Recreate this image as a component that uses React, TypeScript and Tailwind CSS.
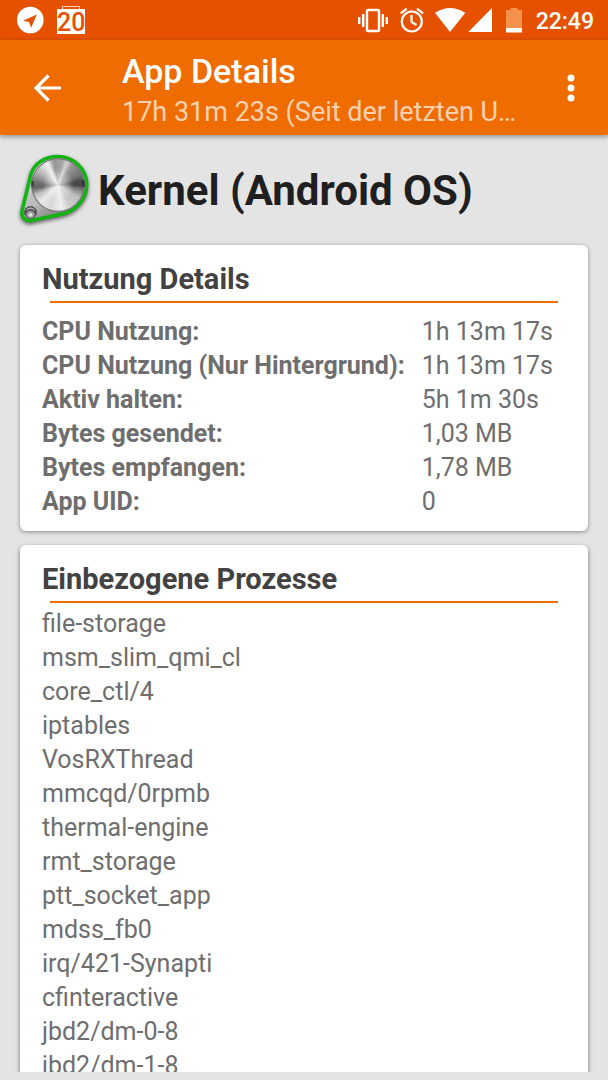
import React from 'react';

type Row = { label: string; value: string };

const usage: Row[] = [
  { label: 'CPU Nutzung:', value: '1h 13m 17s' },
  { label: 'CPU Nutzung (Nur Hintergrund):', value: '1h 13m 17s' },
  { label: 'Aktiv halten:', value: '5h 1m 30s' },
  { label: 'Bytes gesendet:', value: '1,03 MB' },
  { label: 'Bytes empfangen:', value: '1,78 MB' },
  { label: 'App UID:', value: '0' },
];

const processes = [
  'file-storage',
  'msm_slim_qmi_cl',
  'core_ctl/4',
  'iptables',
  'VosRXThread',
  'mmcqd/0rpmb',
  'thermal-engine',
  'rmt_storage',
  'ptt_socket_app',
  'mdss_fb0',
  'irq/421-Synapti',
  'cfinteractive',
  'jbd2/dm-0-8',
  'jbd2/dm-1-8',
];

function StatusBar() {
  return (
    <div className="flex h-10 shrink-0 items-center justify-between bg-[#e65100] pr-[14px] pl-4 text-white">
      <div className="flex items-center gap-[13px]">
        <svg className="h-7 w-7" viewBox="0 0 28 28" aria-hidden="true">
          <circle cx="14.3" cy="14" r="13.3" fill="#fff" />
          <path d="M20.8 8.4 7 14.7l6 1.3 2.2 5.8z" fill="#e65100" />
        </svg>
        <div className="flex flex-col items-center">
          <span className="h-[3px] w-[18px] border border-b-0 border-white/70" />
          <span className="h-[25px] w-7 bg-white text-center text-[25px] leading-7 font-medium text-[#e65100]">20</span>
        </div>
      </div>
      <div className="flex items-center gap-3">
        <svg className="h-10 w-[172px]" viewBox="352 0 172 40" aria-hidden="true">
          {/* vibrate */}
          <g fill="none" stroke="#fff" strokeWidth="2.4">
            <rect x="367" y="10" width="12" height="21" rx="1" />
            <path d="M363.2 14v13M359.2 17v7M382.8 14v13M386.8 17v7" />
          </g>
          {/* alarm */}
          <g fill="none" stroke="#fff" strokeWidth="2.2">
            <circle cx="411.8" cy="21.5" r="10" />
            <path d="M411.5 15v7l5 3M400.7 13.4l6-4.7M423 13.4l-6-4.7" />
          </g>
          <path d="M435 12.7q15-9.4 30.3 0L450 32z" fill="#fff" />
          <path d="M492 8v24h-23.7z" fill="#fff" />
          <path d="M506 10h4.5V8h7v2h4.5v18h-16z" fill="#f4914c" />
          <path d="M506 28h16v4.5h-16z" fill="#fff" />
        </svg>
        <time className="pt-1 text-[23px] leading-9 font-medium">22:49</time>
      </div>
    </div>
  );
}

function AppBar() {
  return (
    <header className="relative flex h-[95px] shrink-0 items-center bg-[#ef6c00] text-white shadow-[0_2px_5px_rgba(0,0,0,0.35)]">
      <button type="button" aria-label="Zurück" className="flex h-full w-[122px] shrink-0 items-center pl-8">
        <svg className="h-8 w-8" viewBox="0 0 32 32" fill="none" stroke="#fff" strokeWidth="3.2" aria-hidden="true">
          <path d="M29 16H4M16.5 3.5 4 16l12.5 12.5" />
        </svg>
      </button>
      <div className="min-w-0 flex-1 pt-2">
        <h1 className="text-[34px] leading-10 font-medium">App Details</h1>
        <p className="text-[27px] leading-[42px] whitespace-nowrap text-white/70">17h 31m 23s (Seit der letzten U…</p>
      </div>
      <button
        type="button"
        aria-label="Weitere Optionen"
        className="flex h-full w-[74px] shrink-0 items-center justify-center"
      >
        <svg className="h-8 w-8" viewBox="0 0 32 32" fill="#fff" aria-hidden="true">
          <circle cx="16" cy="6" r="3.5" />
          <circle cx="16" cy="16" r="3.5" />
          <circle cx="16" cy="26" r="3.5" />
        </svg>
      </button>
    </header>
  );
}

// brushed metal: [angle, grey], clockwise from the right
const shades = [
  [0, 75],
  [12, 130],
  [30, 190],
  [60, 205],
  [80, 240],
  [110, 215],
  [135, 235],
  [155, 190],
  [172, 100],
  [185, 110],
  [205, 165],
  [225, 205],
  [243, 245],
  [258, 150],
  [280, 165],
  [290, 215],
  [305, 150],
  [335, 115],
  [350, 70],
  [360, 75],
];

const wedges = Array.from({ length: 90 }, (_, i) => {
  const angle = i * 4;
  const next = shades.findIndex(([a]) => a > angle);
  const [a0, g0] = shades[next - 1];
  const [a1, g1] = shades[next];
  const grey = Math.round(g0 + ((g1 - g0) * (angle - a0)) / (a1 - a0));
  const point = (deg: number) => {
    const rad = (deg * Math.PI) / 180;
    return `${38 + 32 * Math.cos(rad)},${32 + 32 * Math.sin(rad)}`;
  };
  return { points: `38,32 ${point(angle - 1)} ${point(angle + 5)}`, fill: `rgb(${grey},${grey},${grey})` };
});

function KernelIcon() {
  const body =
    'M11 21C14.5 10.5 25 3.5 37.7 3.5c16 0 29 12.5 29 28 0 13-8.5 24-21 28.5C35 63 22 65 11.5 67.5 5 68.5 1 64 2 58z';
  return (
    <svg className="h-[74px] w-[74px] shrink-0 overflow-visible" viewBox="0 0 74 74" aria-hidden="true">
      <defs>
        <clipPath id="dial">
          <circle cx="38" cy="32" r="26.5" />
        </clipPath>
        <filter id="soft" x="-20%" y="-20%" width="140%" height="140%">
          <feGaussianBlur stdDeviation="2" />
        </filter>
        <linearGradient id="plate" x1="0" y1="0" x2="0.7" y2="1">
          <stop offset="0" stopColor="#ddd" />
          <stop offset="0.6" stopColor="#bbb" />
          <stop offset="1" stopColor="#666" />
        </linearGradient>
        <radialGradient id="knob" cx="0.5" cy="0.7">
          <stop offset="0" stopColor="#fff" />
          <stop offset="0.5" stopColor="#999" />
          <stop offset="1" stopColor="#444" />
        </radialGradient>
        <radialGradient id="glow">
          <stop offset="0" stopColor="#fff" stopOpacity="0.7" />
          <stop offset="1" stopColor="#fff" stopOpacity="0" />
        </radialGradient>
      </defs>
      <path d={body} fill="#555" stroke="#555" strokeWidth="3" filter="url(#soft)" transform="translate(0 2)" />
      <path d={body} fill="url(#plate)" stroke="#12b414" strokeWidth="3.6" />
      <g clipPath="url(#dial)">
        {wedges.map((w) => (
          <polygon key={w.points} points={w.points} fill={w.fill} />
        ))}
        <circle cx="38" cy="32" r="16" fill="url(#glow)" />
      </g>
      <circle cx="38" cy="32" r="26.3" fill="none" stroke="#777" strokeWidth="1.2" />
      <path d="M12.500 34a26 26 0 0 1 .3-6M63.700 34a26 26 0 0 0-.5-7" fill="none" stroke="#222" strokeOpacity="0.6" strokeWidth="2.5" />
      <circle cx="10.5" cy="59.5" r="6" fill="url(#knob)" stroke="#555" />
      <path d="M6.5 57q4-4 8 0" stroke="#eee" fill="none" />
    </svg>
  );
}

function CardTitle({ children }: { children: React.ReactNode }) {
  return (
    <>
      <h3 className="text-[29px] leading-9 font-bold text-[#424242]">{children}</h3>
      <hr className="mt-1 mr-2 ml-2 border-0 border-t-2 border-[#ef6c00]" />
    </>
  );
}

export default function App() {
  return (
    <div className="flex h-screen flex-col overflow-hidden bg-[#e4e4e4] pb-2 font-[Roboto,sans-serif] text-[#6e6e6e]">
      <StatusBar />
      <AppBar />
      <main className="min-h-0 flex-1 overflow-hidden px-5 pt-[18px]">
        <div className="flex items-center gap-1">
          <KernelIcon />
          <h2 className="pt-[2px] text-[42px] leading-[72px] font-bold whitespace-nowrap text-[#1f1f1f]">
            Kernel (Android OS)
          </h2>
        </div>

        <section className="mt-[18px] rounded-md bg-white px-[22px] pt-4 pb-3 shadow-[0_1px_4px_rgba(0,0,0,0.4)]">
          <CardTitle>Nutzung Details</CardTitle>
          <table className="mt-3 text-left text-[25px] leading-[34px]">
            <tbody>
              {usage.map((row) => (
                <tr key={row.label}>
                  <th scope="row" className="p-0 pr-[17px] font-bold whitespace-nowrap">
                    {row.label}
                  </th>
                  <td className="p-0 whitespace-nowrap">{row.value}</td>
                </tr>
              ))}
            </tbody>
          </table>
        </section>

        <section className="mt-[14px] rounded-md bg-white px-[22px] pt-4 pb-4 shadow-[0_2px_5px_rgba(0,0,0,0.5)]">
          <CardTitle>Einbezogene Prozesse</CardTitle>
          <ul className="mt-1 text-[25px] leading-[34px]">
            {processes.map((name) => (
              <li key={name}>{name}</li>
            ))}
          </ul>
        </section>
      </main>
    </div>
  );
}
